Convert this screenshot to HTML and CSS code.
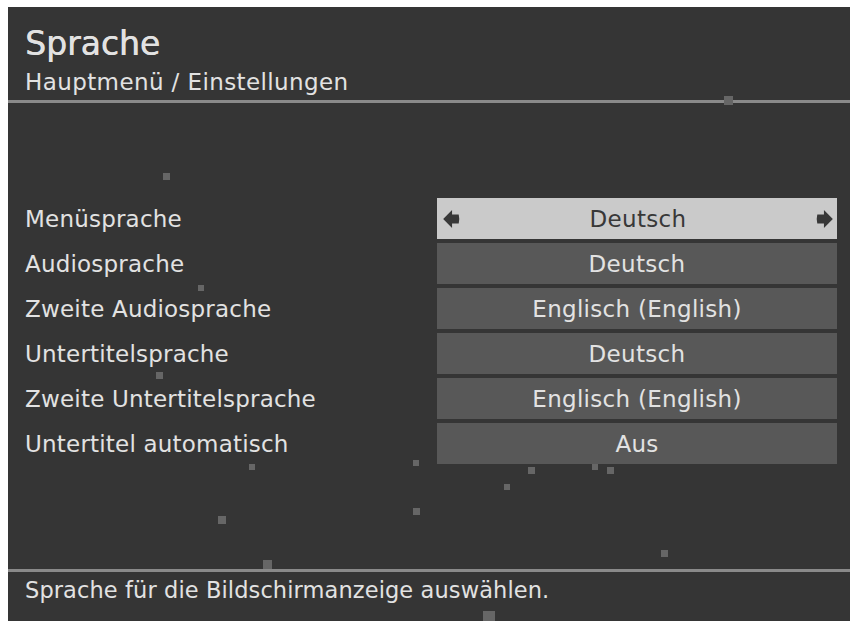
FILE: index.html
```html
<!DOCTYPE html>
<html>
  <head>
    <title>Sprache</title>
    <link rel="stylesheet" href="styles.css">
  </head>
  <body>
    <div id="screen">
      <div id="header">
        <h1>Sprache</h1>
        <p class="path">Hauptmenü / Einstellungen</p>
      </div>

      <div id="settings">
        <div class="row">
          <span class="label">Menüsprache</span>
          <div class="value active">
            <svg class="arrow" viewBox="0 0 15 18"><path d="M0 9 L8 1 L8 5 L14 5 Q15 9 14 13 L8 13 L8 17 Z" /></svg>
            <span>Deutsch</span>
            <svg class="arrow" viewBox="0 0 15 18"><path d="M15 9 L7 1 L7 5 L1 5 Q0 9 1 13 L7 13 L7 17 Z" /></svg>
          </div>
        </div>
        <div class="row">
          <span class="label">Audiosprache</span>
          <div class="value">Deutsch</div>
        </div>
        <div class="row">
          <span class="label">Zweite Audiosprache</span>
          <div class="value">Englisch (English)</div>
        </div>
        <div class="row">
          <span class="label">Untertitelsprache</span>
          <div class="value">Deutsch</div>
        </div>
        <div class="row">
          <span class="label">Zweite Untertitelsprache</span>
          <div class="value">Englisch (English)</div>
        </div>
        <div class="row">
          <span class="label">Untertitel automatisch</span>
          <div class="value">Aus</div>
        </div>
      </div>

      <div id="footer">Sprache für die Bildschirmanzeige auswählen.</div>

      <!-- little grey specks scattered over the screen -->
      <svg id="specks" viewBox="0 0 842 614">
        <rect x="155" y="166" width="7" height="7" />
        <rect x="190" y="278" width="6" height="6" />
        <rect x="148" y="365" width="7" height="7" />
        <rect x="716" y="89" width="9" height="9" />
        <rect x="405" y="453" width="6" height="6" />
        <rect x="520" y="460" width="7" height="7" />
        <rect x="584" y="457" width="6" height="6" />
        <rect x="599" y="460" width="7" height="7" />
        <rect x="496" y="477" width="6" height="6" />
        <rect x="241" y="457" width="6" height="6" />
        <rect x="210" y="509" width="8" height="8" />
        <rect x="405" y="501" width="7" height="7" />
        <rect x="653" y="543" width="7" height="7" />
        <rect x="255" y="553" width="9" height="9" />
        <rect x="475" y="604" width="12" height="10" />
      </svg>
    </div>
  </body>
</html>
```

FILE: styles.css
```css
/* Page around the TV screen */
body {
  margin: 0;
  background-color: #ffffff;
  font-family: "DejaVu Sans", sans-serif;
}

/* The dark menu screen */
#screen {
  position: relative;
  width: 842px;
  height: 614px;
  margin: 7px 0 0 8px;
  background-color: #353535;
  color: #e2e2e2;
  display: flex;
  flex-direction: column;
}

/* Title and breadcrumb */
#header {
  height: 93px;
  padding-left: 17px;
  border-bottom: 3px solid #8a8a8a;
}

#header h1 {
  margin: 20px 0 0 0;
  font-size: 33px;
  font-weight: normal;
  line-height: 33px;
  /* a touch heavier than the body text */
  text-shadow: 0.6px 0 0 #e2e2e2;
}

#header .path {
  margin: 10px 0 0 0;
  font-size: 23px;
  line-height: 24px;
  letter-spacing: 0.4px;
}

/* List of settings */
#settings {
  flex: 1;
  padding-top: 95px;
  display: flex;
  flex-direction: column;
  gap: 4px;
}

.row {
  display: flex;
  align-items: center;
  height: 41px;
}

.label {
  width: 412px;
  padding-left: 17px;
  font-size: 23px;
  letter-spacing: 0.2px;
}

.value {
  width: 400px;
  height: 41px;
  background-color: #585858;
  display: flex;
  align-items: center;
  justify-content: center;
  font-size: 23px;
  letter-spacing: 0.3px;
}

/* Selected row, with arrows on both sides */
.value.active {
  background-color: #cacaca;
  color: #383838;
  justify-content: space-between;
  padding: 0 4px 0 6px;
  box-sizing: border-box;
}

.arrow {
  width: 17px;
  height: 20px;
  fill: #383838;
}

/* Help text at the bottom */
#footer {
  height: 43px;
  border-top: 3px solid #8a8a8a;
  padding: 6px 0 0 17px;
  font-size: 22.5px;
  line-height: 24px;
  letter-spacing: 0.1px;
}

#specks {
  position: absolute;
  top: 0;
  left: 0;
  width: 842px;
  height: 614px;
  fill: #666666;
  pointer-events: none;
}
```
